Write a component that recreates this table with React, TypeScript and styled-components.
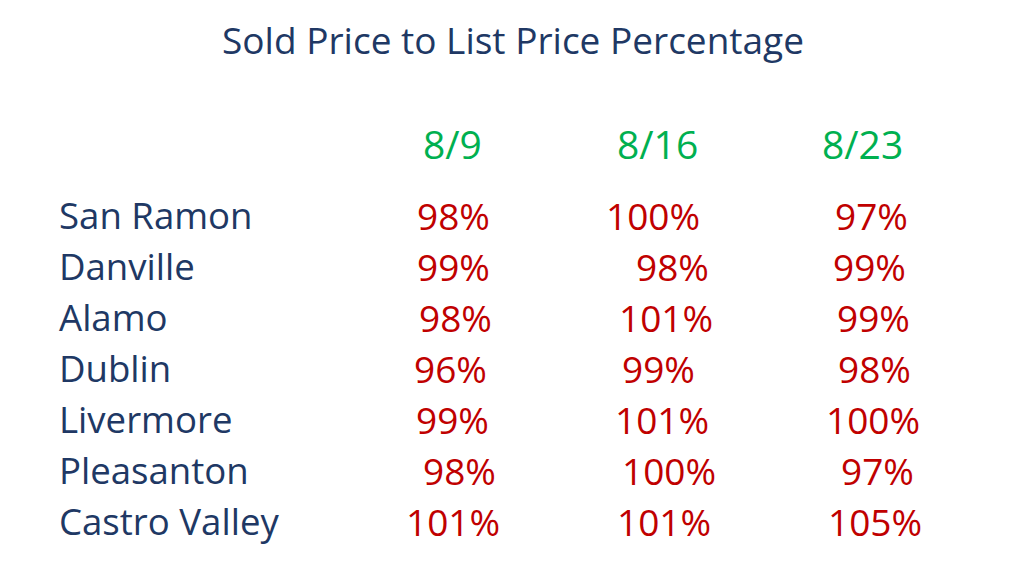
import React from "react";
import styled, { createGlobalStyle } from "styled-components";

const Global = createGlobalStyle`
  html, body { margin: 0; padding: 0; background: #ffffff; }
  body { font-family: "Open Sans", "Liberation Sans", sans-serif; }
`;

const Slide = styled.div`
  width: 1024px;
  height: 576px;
  background: #ffffff;
  display: flex;
  flex-direction: column;
  overflow: hidden;
`;

const Title = styled.h1`
  margin: 0;
  height: 80px;
  line-height: 80px;
  text-align: center;
  font-weight: 400;
  font-size: 37px;
  color: #203864;
  padding-left: 2px;
`;

const Table = styled.div`
  margin-top: 38px;
  padding-left: 59px;
  display: grid;
  grid-template-columns: 341px 200px 220px 1fr;
`;

const Row = styled.div`
  display: contents;
`;

const Cell = styled.div<{ $offset?: number; $kind: "name" | "head" | "value"; $gapAfter?: boolean }>`
  height: 51px;
  line-height: 51px;
  font-size: ${(p) => (p.$kind === "name" ? 36.6 : p.$kind === "head" ? 39 : 37)}px;
  white-space: nowrap;
  padding-left: ${(p) => p.$offset ?? 0}px;
  margin-bottom: ${(p) => (p.$gapAfter ? 21 : 0)}px;
  color: ${(p) => (p.$kind === "name" ? "#203864" : p.$kind === "head" ? "#00b050" : "#c00000")};
`;

const columnStarts = [400, 600, 820];
const headers: [string, number][] = [
  ["8/9", 423],
  ["8/16", 617],
  ["8/23", 822],
];

const rows: { name: string; values: [string, number][] }[] = [
  { name: "San Ramon", values: [["98%", 417], ["100%", 606], ["97%", 835]] },
  { name: "Danville", values: [["99%", 417], ["98%", 636], ["99%", 833]] },
  { name: "Alamo", values: [["98%", 419], ["101%", 619], ["99%", 837]] },
  { name: "Dublin", values: [["96%", 414], ["99%", 622], ["98%", 838]] },
  { name: "Livermore", values: [["99%", 416], ["101%", 615], ["100%", 826]] },
  { name: "Pleasanton", values: [["98%", 423], ["100%", 622], ["97%", 841]] },
  { name: "Castro Valley", values: [["101%", 406], ["101%", 617], ["105%", 828]] },
];

export default function App() {
  return (
    <>
      <Global />
      <Slide>
        <Title>Sold Price to List Price Percentage</Title>
        <Table>
          <Row>
            <Cell $kind="name" $gapAfter />
            {headers.map(([h, x], i) => (
              <Cell key={h} $kind="head" $gapAfter $offset={x - columnStarts[i]}>
                {h}
              </Cell>
            ))}
          </Row>
          {rows.map((r) => (
            <Row key={r.name}>
              <Cell $kind="name">{r.name}</Cell>
              {r.values.map(([v, x], i) => (
                <Cell key={i} $kind="value" $offset={x - columnStarts[i]}>
                  {v}
                </Cell>
              ))}
            </Row>
          ))}
        </Table>
      </Slide>
    </>
  );
}
